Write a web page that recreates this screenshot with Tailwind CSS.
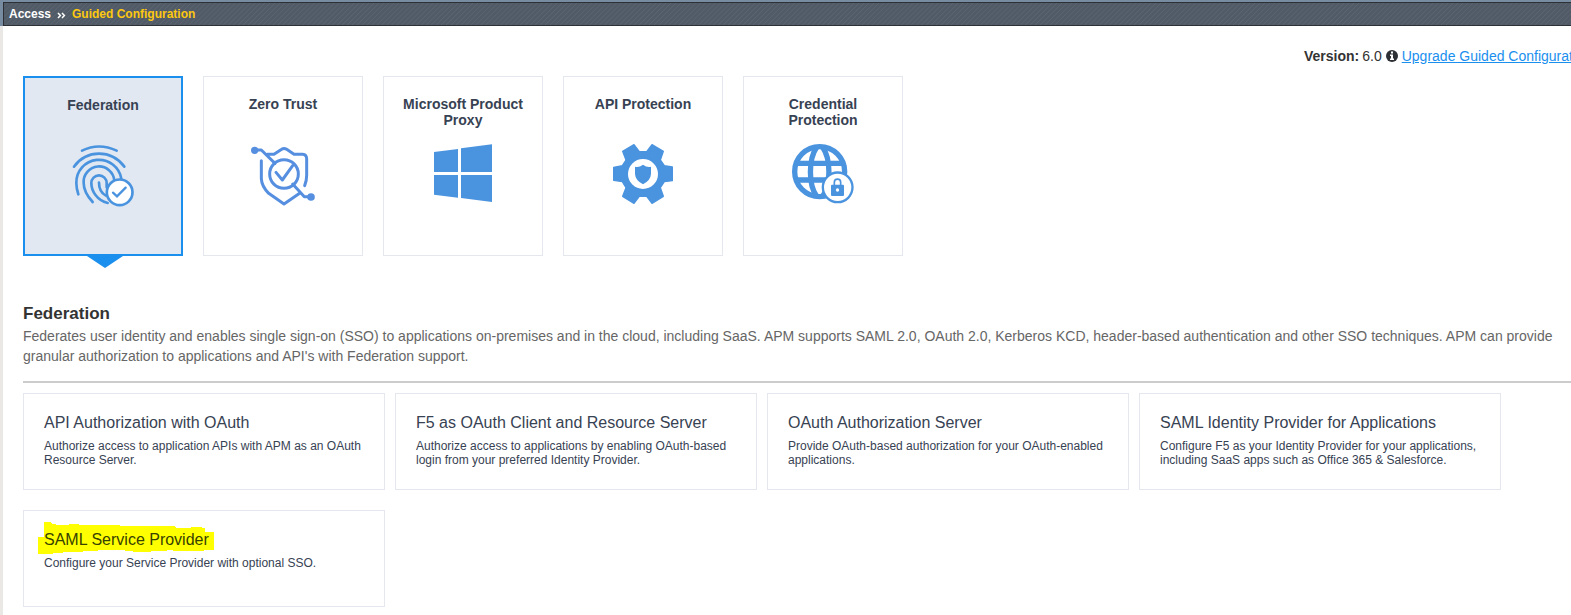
<!DOCTYPE html>
<html lang="en">
<head>
<meta charset="utf-8">
<title>Guided Configuration</title>
<script src="https://cdn.jsdelivr.net/npm/@tailwindcss/browser@4"></script>
</head>
<body class="h-[615px] overflow-hidden bg-white font-['Liberation_Sans',Arial,sans-serif] text-[#333]">
<div class="flex h-[615px] flex-col overflow-hidden">
  <header class="h-[26px] shrink-0 bg-[#778ca0] pt-[2px] pl-[3px]">
    <div class="flex h-6 items-center border-y border-l border-[#2d3034] bg-[#535f6b] bg-[repeating-linear-gradient(135deg,#505b67_0px,#505b67_2px,#5a6570_2.6px,#505b67_3.5px)] pl-[5px] text-xs leading-[14px] font-bold text-white">
      <span class="w-12">Access</span>
      <svg class="mt-[2px] mr-[6px] h-[7px] w-[9px]" viewBox="0 0 9 7" fill="none" stroke="#fff" stroke-width="1.5"><path d="M1 1l2.400 2.500L1 6M5 1l2.400 2.500L5 6"/></svg>
      <span class="text-[#fdc80f]">Guided Configuration</span>
    </div>
  </header>

  <main class="flex-1 border-l-[3px] border-[#eae8e4] pl-5">
    <div class="flex h-[50px] items-start pt-[22px] pl-[1281px] text-sm leading-4 whitespace-nowrap">
      <b>Version:</b><span class="ml-[3px]">6.0</span>
      <svg class="mt-[2px] mr-1 ml-1 size-3 shrink-0" viewBox="0 0 12 12"><circle cx="6" cy="6" r="6" fill="#2d3034"/><path d="M5 1.500h2v2H5zM4 4.600h3v4h1V10H4V8.600h1V6H4z" fill="#fff"/></svg>
      <a class="text-[#1a8fee] underline" href="#">Upgrade Guided Configuration</a>
    </div>

    <nav class="flex gap-5 text-center text-sm leading-4 font-bold text-[#374253]">
      <div class="relative flex h-[180px] w-40 flex-col items-center border-2 border-[#1a8fee] bg-[#e1e8f2] pt-[19px]">
        <div class="h-8">Federation</div>
        <svg class="mt-[11px] size-[70px]" viewBox="159 210 210 210" fill="none" stroke="#4a93df" stroke-width="8" stroke-linecap="round">
          <path d="M201 242Q252 217 305 242M177 290C215 238 289 238 328 290M190 373Q184 355 184 339A68 68 0 0 1 319 326M233 396Q206 367 206 339A46 46 0 0 1 298 332M278 399C246 391 229 363 229 339A23 23 0 0 1 275 339V352M252 338C252 357 260 370 273 377"/>
          <circle cx="314" cy="367" r="38.500" fill="#fff"/><path d="M294 368l12 11 26-26" stroke-width="7"/>
        </svg>
        <svg class="absolute top-[177px] left-[62px] h-[13px] w-9" viewBox="0 0 36 13"><path d="M0 0h36v1L18 13 0 1z" fill="#1a8fee"/></svg>
      </div>

      <div class="flex h-[180px] w-40 flex-col items-center border border-[#e4e7ee] pt-[19px]">
        <div class="h-8">Zero Trust</div>
        <svg class="mt-3 size-[70px]" viewBox="159 210 210 210" fill="none" stroke="#568fe0" stroke-width="9" stroke-linecap="round" stroke-linejoin="round">
          <path d="M182 240H199L240 280M217 253H237L260 238Q267 233 275 238L297 253H323Q335 254 335 267V316Q335 333 329 347M199 272V326Q200 349 221 370L267 402 315 369M293 342L328 380H346"/>
          <circle cx="267" cy="312" r="43"/><path d="M243 307l19 23 31-43"/>
          <g fill="#568fe0" stroke="none"><circle cx="179" cy="241" r="11"/><circle cx="348" cy="381" r="11.500"/></g>
        </svg>
      </div>

      <div class="flex h-[180px] w-40 flex-col items-center border border-[#e4e7ee] pt-[19px]">
        <div class="h-8">Microsoft Product<br>Proxy</div>
        <svg class="mt-3 size-[70px]" viewBox="159 210 210 210" fill="#4a93df">
          <path d="M177 246l72-9v69h-72zM258 235l93-12v83h-93zM177 315h72v68l-72-9zM258 315h93v81l-93-12z"/>
        </svg>
      </div>

      <div class="flex h-[180px] w-40 flex-col items-center border border-[#e4e7ee] pt-[19px]">
        <div class="h-8">API Protection</div>
        <svg class="mt-3 size-[70px]" viewBox="159 210 210 210" fill="#4a93df">
          <path stroke="#4a93df" stroke-width="4" stroke-linejoin="round" d="M237 224L253 245H275L291 224 325 244 316 270 328 287 352 291V332L328 335 316 353 325 379 291 400 275 379H253L237 400 203 379 213 353 202 335 176 331V292L202 287 213 270 203 244Z"/>
          <circle cx="264" cy="312" r="45" fill="#fff"/>
          <path d="M264 284Q276 293 288 290V312Q287 331 264 343Q241 331 240 312V290Q252 293 264 284Z"/>
        </svg>
      </div>

      <div class="flex h-[180px] w-40 flex-col items-center border border-[#e4e7ee] pt-[19px]">
        <div class="h-8">Credential<br>Protection</div>
        <svg class="mt-3 size-[70px]" viewBox="159 210 210 210" fill="none" stroke="#4a93df">
          <g stroke-width="16"><circle cx="254" cy="305" r="75"/><path d="M184 280H324M184 330H324M245 232C220 268 220 344 245 379M263 232C288 268 288 344 263 379"/></g>
          <circle cx="308" cy="352" r="44.500" fill="#fff" stroke-width="7"/>
          <path d="M298 346V337C298 324 317 324 317 337V346" stroke-width="5"/>
          <rect x="288" y="344" width="39" height="34" rx="3" fill="#4a93df" stroke="none"/><circle cx="307.500" cy="360" r="5" fill="#fff" stroke="none"/>
        </svg>
      </div>
    </nav>

    <section class="pt-12">
      <h1 class="text-[17px] leading-5 font-bold">Federation</h1>
      <p class="mt-[2px] w-[1535px] text-sm leading-5 text-[#666]">Federates user identity and enables single sign-on (SSO) to applications on-premises and in the cloud, including SaaS. APM supports SAML 2.0, OAuth 2.0, Kerberos KCD, header-based authentication and other SSO techniques. APM can provide granular authorization to applications and API's with Federation support.</p>
      <hr class="mt-[15px] border-t-2 border-[#ccc]">
      <div class="mt-[10px] grid grid-cols-[repeat(4,362px)] gap-x-[10px] gap-y-5 text-xs leading-[14px] text-[#374253]">
        <article class="h-[97px] border border-[#e4e7ee] px-5 pt-5">
          <h2 class="mb-[7px] text-base leading-[18px]">API Authorization with OAuth</h2>
          <p>Authorize access to application APIs with APM as an OAuth<br>Resource Server.</p>
        </article>
        <article class="h-[97px] border border-[#e4e7ee] px-5 pt-5">
          <h2 class="mb-[7px] text-base leading-[18px]">F5 as OAuth Client and Resource Server</h2>
          <p>Authorize access to applications by enabling OAuth-based<br>login from your preferred Identity Provider.</p>
        </article>
        <article class="h-[97px] border border-[#e4e7ee] px-5 pt-5">
          <h2 class="mb-[7px] text-base leading-[18px]">OAuth Authorization Server</h2>
          <p>Provide OAuth-based authorization for your OAuth-enabled<br>applications.</p>
        </article>
        <article class="h-[97px] border border-[#e4e7ee] px-5 pt-5">
          <h2 class="mb-[7px] text-base leading-[18px]">SAML Identity Provider for Applications</h2>
          <p>Configure F5 as your Identity Provider for your applications,<br>including SaaS apps such as Office 365 &amp; Salesforce.</p>
        </article>
        <article class="relative h-[97px] border border-[#e4e7ee] px-5 pt-5">
          <svg class="absolute top-[11px] left-[14px] h-8 w-44" viewBox="114 66 528 96" fill="#ff0"><path d="M132 66H153V69H156V72H168V75H207V72H237V75H360V78H525V81H528V84H573V81H606V84H615V96H642V150H612V153H519V150H501V153H453V156H399V153H375V150H294V153H249V156H189V159H159V162H114V111H132Z"/></svg>
          <h2 class="relative mb-[7px] text-base leading-[18px] text-[#374200]">SAML Service Provider</h2>
          <p class="relative">Configure your Service Provider with optional SSO.</p>
        </article>
      </div>
    </section>
  </main>
</div>
</body>
</html>
